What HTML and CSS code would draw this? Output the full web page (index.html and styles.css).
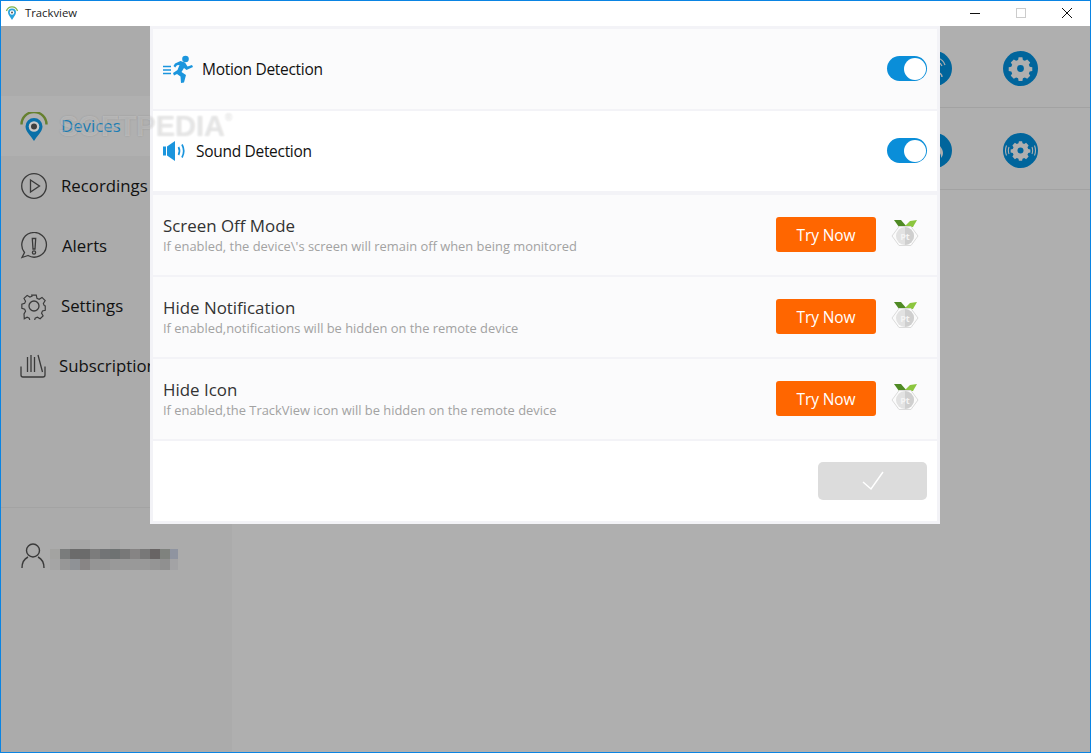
FILE: index.html
```html
<!DOCTYPE html>
<html lang="en">
<head>
<meta charset="utf-8">
<title>Trackview</title>
<link rel="stylesheet" href="styles.css">
</head>
<body>
<div class="window">
  <header class="titlebar">
    <svg class="app-icon" width="14" height="16" viewBox="0 0 14 16">
      <path d="M1.500 6A5.700 5.700 0 0 1 12.500 6" fill="none" stroke="#7fb24a" stroke-width="1.300"/>
      <path d="M7 3.500a4 4 0 0 1 4 4c0 2.500-2.500 4.500-4 7.500-1.500-3-4-5-4-7.500a4 4 0 0 1 4-4z" fill="#2aa3dc"/>
      <circle cx="7" cy="7.500" r="2.200" fill="#fff"/>
      <circle cx="7" cy="7.500" r="1" fill="#555"/>
    </svg>
    <span class="app-title">Trackview</span>
    <div class="win-controls">
      <svg class="win-btn" width="46" height="12" viewBox="0 0 46 12"><path d="M18 6.500h10" stroke="#111" stroke-width="1"/></svg>
      <svg class="win-btn" width="46" height="12" viewBox="0 0 46 12"><rect x="18.500" y="1.500" width="9" height="9" fill="none" stroke="#ccc"/></svg>
      <svg class="win-btn" width="46" height="12" viewBox="0 0 46 12"><path d="M18 1l10 10M28 1L18 11" stroke="#111" stroke-width="1" fill="none"/></svg>
    </div>
  </header>
  <div class="content">
    <aside class="sidebar">
      <nav class="nav">
        <div class="nav-item active">
          <svg class="nav-icon nav-icon-pin" width="28" height="30" viewBox="0 0 28 30">
            <path d="M1.500 12.500A12.500 12.500 0 0 1 26.500 12.500" fill="none" stroke="#66802f" stroke-width="2.400"/>
            <path d="M14 6a8.500 8.500 0 0 1 8.500 8.500c0 5-5.500 9.500-8.500 14.500-3-5-8.500-9.500-8.500-14.500A8.500 8.500 0 0 1 14 6z" fill="#0a70a8"/>
            <circle cx="14" cy="14.500" r="5.300" fill="#c9c9c9"/>
            <circle cx="14" cy="14.500" r="3" fill="#3f3f3f"/>
          </svg>
          <span class="nav-label nav-label-active">Devices</span>
        </div>
        <div class="nav-item">
          <svg class="nav-icon" width="28" height="28" viewBox="0 0 28 28" fill="none" stroke="#3a3a3a" stroke-width="1.300">
            <circle cx="14" cy="14" r="12.300"/>
            <path d="M10.500 8l9 6-9 6z"/>
          </svg>
          <span class="nav-label">Recordings</span>
        </div>
        <div class="nav-item">
          <svg class="nav-icon" width="28" height="28" viewBox="0 0 28 28" fill="none" stroke="#3a3a3a" stroke-width="1.300">
            <path d="M8 23.500l-6 2 2.500-5A12.300 12.300 0 1 1 8 23.500z"/>
            <path d="M12.300 6.500h3.400l-.7 10.500h-2z"/>
            <circle cx="14" cy="20.500" r="1.600"/>
          </svg>
          <span class="nav-label nav-label-alerts">Alerts</span>
        </div>
        <div class="nav-item">
          <svg class="nav-icon" width="28" height="28" viewBox="0 0 28 28" fill="none" stroke="#3a3a3a" stroke-width="1.300">
            <circle cx="14" cy="14" r="5"/>
            <path d="M11.500 2h5l.8 3.600 2.400 1 3.200-2 3.500 3.500-2 3.200 1 2.400 1.100.3v4.800l-3.100.8-1 2.400 1.700 3-3.300 3.300-3.100-1.700-2.400 1-.8 3h-5l-.8-3-2.400-1-3.100 1.700L2.900 23l1.700-3-1-2.400-3.100-.8V12l3.100-.8 1-2.400-1.700-3.100L6.400 2.300l3 1.900 2.400-1z" transform="translate(1.400 1.300) scale(.9)"/>
          </svg>
          <span class="nav-label">Settings</span>
        </div>
        <div class="nav-item">
          <svg class="nav-icon nav-icon-sub" width="26" height="24" viewBox="0 0 26 24" fill="none" stroke="#3a3a3a" stroke-width="1.300">
            <path d="M1 12.500v8.500q0 2 2 2h20q2 0 2-2v-8.500"/>
            <path d="M7.500 3v15M11 1v17M14.500 3v15M18 1l4.500 17"/>
          </svg>
          <span class="nav-label nav-label-sub">Subscription</span>
        </div>
      </nav>
      <div class="account">
        <svg class="user-icon" width="24" height="26" viewBox="0 0 24 26" fill="none" stroke="#3a3a3a" stroke-width="1.400">
          <circle cx="12" cy="7.500" r="6.500"/>
          <path d="M1 25c0-6 2-9 6-11M23 25c0-6-2-9-6-11"/>
        </svg>
        <svg class="user-name" width="128" height="30" viewBox="0 0 128 30" shape-rendering="crispEdges">
          <rect x="20" y="0" width="20" height="9" fill="#a6a6a6"/>
          <rect x="60" y="0" width="10" height="9" fill="#a6a6a6"/>
          <rect x="0" y="9" width="10" height="10" fill="#a3a3a1"/>
          <rect x="10" y="9" width="10" height="10" fill="#7a7c7c"/>
          <rect x="20" y="9" width="20" height="10" fill="#6b6b6b"/>
          <rect x="40" y="9" width="10" height="10" fill="#7c7c7c"/>
          <rect x="50" y="9" width="10" height="10" fill="#727476"/>
          <rect x="60" y="9" width="10" height="10" fill="#6e7272"/>
          <rect x="70" y="9" width="10" height="10" fill="#787878"/>
          <rect x="80" y="9" width="10" height="10" fill="#868484"/>
          <rect x="90" y="9" width="10" height="10" fill="#787878"/>
          <rect x="100" y="9" width="10" height="10" fill="#686464"/>
          <rect x="110" y="9" width="10" height="10" fill="#7f827e"/>
          <rect x="120" y="9" width="8" height="10" fill="#8f94a0"/>
          <rect x="0" y="19" width="10" height="11" fill="#a5a5a5"/>
          <rect x="10" y="19" width="10" height="11" fill="#979797"/>
          <rect x="20" y="19" width="10" height="11" fill="#8f9296"/>
          <rect x="30" y="19" width="10" height="11" fill="#888585"/>
          <rect x="40" y="19" width="20" height="11" fill="#959595"/>
          <rect x="60" y="19" width="40" height="11" fill="#999"/>
          <rect x="100" y="19" width="10" height="11" fill="#959595"/>
          <rect x="110" y="19" width="10" height="11" fill="#909090"/>
          <rect x="120" y="19" width="8" height="11" fill="#a3a3a5"/>
        </svg>
      </div>
    </aside>
    <main class="devices">
      <div class="device-row">
        <svg class="round-btn" width="35" height="35" viewBox="0 0 35 35">
          <circle cx="17.500" cy="17.500" r="17.500" fill="#00659c"/>
          <path d="M21 7a11 11 0 0 1 7 7M21 11a7 7 0 0 1 4 4" stroke="#afafaf" fill="none" stroke-width="1.200"/>
          <path d="M20 22a4 4 0 0 1 5 4" stroke="#afafaf" fill="none" stroke-width="1.500"/>
        </svg>
        <svg class="round-btn" width="35" height="35" viewBox="0 0 35 35">
          <circle cx="17.500" cy="17.500" r="17.500" fill="#00659c"/>
          <g fill="#afafaf" transform="translate(17.500 17.500) scale(.86)">
            <path d="M-2.200-13h4.400l.6 3 2.300 1 2.700-1.600 3.500 3.500-1.600 2.700 1 2.300 3 .6v4.400l-3 .6-1 2.300 1.600 2.700-3.500 3.500-2.700-1.600-2.300 1-.6 3h-4.400l-.6-3-2.300-1-2.700 1.600-3.500-3.500 1.600-2.700-1-2.300-3-.6v-4.400l3-.6 1-2.300-1.600-2.700 3.500-3.500 2.700 1.600 2.300-1z"/>
          </g>
          <circle cx="17.500" cy="17.500" r="3.400" fill="#00659c"/>
        </svg>
      </div>
      <div class="device-row">
        <svg class="round-btn" width="35" height="35" viewBox="0 0 35 35">
          <circle cx="17.500" cy="17.500" r="17.500" fill="#00659c"/>
          <path d="M21 9c1 4 5 6 5 11 0 2-1 4-2 5 .5-3-1-5-2.500-7-1 2-2 3-2 5-1-2-1-4 0-6 1-3 2-5 1.500-8z" fill="#afafaf"/>
        </svg>
        <svg class="round-btn" width="35" height="35" viewBox="0 0 35 35">
          <circle cx="17.500" cy="17.500" r="17.500" fill="#00659c"/>
          <g fill="#afafaf" transform="translate(17.500 17.500) scale(.72)">
            <path d="M-2.200-13h4.400l.6 3 2.300 1 2.700-1.600 3.500 3.500-1.600 2.700 1 2.300 3 .6v4.400l-3 .6-1 2.300 1.600 2.700-3.500 3.500-2.700-1.600-2.300 1-.6 3h-4.400l-.6-3-2.300-1-2.700 1.600-3.500-3.500 1.600-2.700-1-2.300-3-.6v-4.400l3-.6 1-2.300-1.600-2.700 3.500-3.500 2.700 1.600 2.300-1z"/>
          </g>
          <circle cx="17.500" cy="17.500" r="3" fill="#00659c"/>
          <path d="M3.500 12.500q-2 5 0 10M6 14q-1.300 3.500 0 7M31.500 12.500q2 5 0 10M29 14q1.300 3.500 0 7" stroke="#afafaf" fill="none" stroke-width="1.100"/>
        </svg>
      </div>
    </main>
  </div>

  <section class="modal">
    <div class="row row-tint">
      <svg class="row-icon" width="31" height="29" viewBox="0 0 31 29">
        <path d="M0 11.500h8M0 15h8M0 18.500h8" stroke="#1b95dd" stroke-width="1.500"/>
        <circle cx="22.500" cy="4" r="3.300" fill="#1b95dd"/>
        <path d="M12 8.500l5.500-2.500 4.500 1.500 2.500 4 4.500-1.500 1 2-6.500 3-2.500-2-2.500 4 4.500 3-2 7.500-3 .5-.5-6.500-3.500-2.500-3 1.500-1-2.500 4.500-3 2-5-2.500.2-1.800 2.300-1.700-1.500z" fill="#1b95dd"/>
      </svg>
      <span class="toggle-label">Motion Detection</span>
      <div class="toggle"><div class="knob"></div></div>
    </div>
    <div class="row row-white row-last-toggle">
      <svg class="row-icon row-icon-sound" width="25" height="20" viewBox="0 0 25 20">
        <rect x="0" y="5.500" width="3" height="9" fill="#1b95dd"/>
        <path d="M4 5.500L12 0v20l-8-5.500z" fill="#1b95dd"/>
        <path d="M15.500 6q2 4 0 8M19 3.500q3.500 6.500 0 13" fill="none" stroke="#1b95dd" stroke-width="1.700"/>
      </svg>
      <span class="toggle-label">Sound Detection</span>
      <div class="toggle"><div class="knob"></div></div>
    </div>
    <div class="row row-tint">
      <div class="feature">
        <div class="feature-title">Screen Off Mode</div>
        <div class="feature-desc">If enabled, the device\'s screen will remain off when being monitored</div>
      </div>
      <button class="try-btn">Try Now</button>
      <svg class="medal" width="28" height="32" viewBox="0 0 28 32">
        <path d="M3 1h7l6 7H8z" fill="#4f8a24"/>
        <path d="M13 8l6-6 7-1-4 7z" fill="#8cc63f"/>
        <path d="M8 7.500h12l7 9.500-7 9.500H8L1 17z" fill="#fbfbfb" stroke="#dcdcdc"/>
        <circle cx="14" cy="17" r="9" fill="#e2e2e2"/>
        <path d="M14 8a9 9 0 0 1 0 18z" fill="#cfcfcf"/>
        <text class="medal-text" x="14" y="20.500" text-anchor="middle">Pt</text>
      </svg>
    </div>
    <div class="row row-tint">
      <div class="feature">
        <div class="feature-title">Hide Notification</div>
        <div class="feature-desc">If enabled,notifications will be hidden on the remote device</div>
      </div>
      <button class="try-btn">Try Now</button>
      <svg class="medal" width="28" height="32" viewBox="0 0 28 32">
        <path d="M3 1h7l6 7H8z" fill="#4f8a24"/>
        <path d="M13 8l6-6 7-1-4 7z" fill="#8cc63f"/>
        <path d="M8 7.500h12l7 9.500-7 9.500H8L1 17z" fill="#fbfbfb" stroke="#dcdcdc"/>
        <circle cx="14" cy="17" r="9" fill="#e2e2e2"/>
        <path d="M14 8a9 9 0 0 1 0 18z" fill="#cfcfcf"/>
        <text class="medal-text" x="14" y="20.500" text-anchor="middle">Pt</text>
      </svg>
    </div>
    <div class="row row-tint">
      <div class="feature">
        <div class="feature-title">Hide Icon</div>
        <div class="feature-desc">If enabled,the TrackView icon will be hidden on the remote device</div>
      </div>
      <button class="try-btn">Try Now</button>
      <svg class="medal" width="28" height="32" viewBox="0 0 28 32">
        <path d="M3 1h7l6 7H8z" fill="#4f8a24"/>
        <path d="M13 8l6-6 7-1-4 7z" fill="#8cc63f"/>
        <path d="M8 7.500h12l7 9.500-7 9.500H8L1 17z" fill="#fbfbfb" stroke="#dcdcdc"/>
        <circle cx="14" cy="17" r="9" fill="#e2e2e2"/>
        <path d="M14 8a9 9 0 0 1 0 18z" fill="#cfcfcf"/>
        <text class="medal-text" x="14" y="20.500" text-anchor="middle">Pt</text>
      </svg>
    </div>
    <div class="row row-white row-footer">
      <button class="confirm-btn" aria-label="Confirm">
        <svg width="22" height="20" viewBox="0 0 22 20"><path d="M1 11l8 7L21 1" fill="none" stroke="#fff" stroke-width="1.500"/></svg>
      </button>
    </div>
  </section>
  <div class="watermark">SOFTPEDIA<sup class="reg">®</sup></div>
</div>
</body>
</html>
```
FILE: styles.css
```css
* { box-sizing: border-box; }
html, body { margin: 0; height: 100%; }
body { font-family: "Open Sans", "Noto Sans", sans-serif; overflow: hidden; }

.window {
  position: relative;
  width: 1091px;
  height: 753px;
  border: 1px solid #0a84e3;
  display: flex;
  flex-direction: column;
  background: #afafaf;
  overflow: hidden;
}

.titlebar {
  height: 25px;
  flex: none;
  background: #fff;
  display: flex;
  align-items: center;
  padding: 0 0 2px 4px;
}
.app-icon { margin-right: 6px; }
.app-title { font-size: 11.300px; color: #222; }
.win-controls { margin-left: auto; margin-right: 0; display: flex; }
.win-btn { display: block; }

.content { flex: 1; display: flex; min-height: 0; }

.sidebar {
  width: 231px;
  flex: none;
  background: #ababab;
  padding-top: 70px;
  display: flex;
  flex-direction: column;
}
.nav { height: 412px; border-bottom: 1px solid #a3a3a3; }
.nav-item {
  height: 60px;
  display: flex;
  align-items: center;
  padding-left: 19px;
  gap: 13px;
}
.nav-item.active { background: #b0b0b0; }
.nav-icon { flex: none; }
.nav-icon-pin { margin-top: 2px; }
.nav-label { font-size: 16.800px; color: #111; white-space: nowrap; margin-top: -2px; }
.nav-label-active { color: #1a7db5; }
.nav-label-alerts { margin-left: 1px; }

.account {
  display: flex;
  align-items: flex-start;
  padding: 35px 0 0 20px;
}
.user-icon { margin-right: 5px; }
.user-name { margin-top: -3px; }

.devices { flex: 1; display: flex; flex-direction: column; }
.device-row {
  height: 82px;
  border-bottom: 1px solid #a2a2a2;
  display: flex;
  align-items: center;
  justify-content: flex-end;
  gap: 51px;
  padding: 4px 52px 0 0;
}
.round-btn { display: block; flex: none; }

.modal {
  position: absolute;
  left: 149px;
  top: 25px;
  width: 790px;
  height: 498px;
  background: #f3f3f7;
  padding: 3px;
  display: flex;
  flex-direction: column;
  gap: 2px;
}
.row {
  height: 80px;
  flex: none;
  display: flex;
  align-items: center;
  padding: 0 10px;
}
.row-tint { background: #fbfbfc; }
.row-white { background: #fff; }
.row-last-toggle { margin-bottom: 2px; }
.row-footer { justify-content: flex-end; }

.row-icon { flex: none; margin-right: 8px; }
.toggle-label { font-size: 15.500px; letter-spacing: -.3px; color: #111; }

.toggle {
  margin: -1px 0 0 auto;
  width: 40px;
  height: 25px;
  border-radius: 13px;
  background: #0a8ed9;
  display: flex;
  align-items: center;
  justify-content: flex-end;
  padding-right: 1px;
}
.knob { width: 22px; height: 22px; border-radius: 50%; background: #fff; }

.feature { flex: 1; min-width: 0; padding-bottom: 1px; }
.feature-title { font-size: 16.900px; line-height: 22px; color: #333; }
.feature-desc { margin-top: 1px; font-size: 12.900px; line-height: 16px; color: #a2a2a2; }

.try-btn {
  width: 100px;
  height: 35px;
  flex: none;
  border: 0;
  border-radius: 3px;
  background: #ff6600;
  color: #fff;
  font: 15.500px "Open Sans", sans-serif;
  letter-spacing: -.1px;
  padding: 0;
  margin: -1px 15px 0 0;
}
.medal { flex: none; margin: -1px 8px 0 0; }
.medal-text { font: 700 9px "Open Sans", sans-serif; fill: #f4f4f4; }

.confirm-btn {
  width: 109px;
  height: 38px;
  border: 0;
  border-radius: 5px;
  background: #dcdcdc;
  display: flex;
  align-items: center;
  justify-content: center;
  padding: 0;
}

.watermark {
  position: absolute;
  left: 58px;
  top: 109px;
  font: 700 29px "Liberation Sans", sans-serif;
  color: rgba(255, 255, 255, .27);
  text-shadow: 0 0 2px rgba(0, 0, 0, .14);
  pointer-events: none;
}
.reg { font-size: 10px; vertical-align: top; line-height: 16px; }
```
